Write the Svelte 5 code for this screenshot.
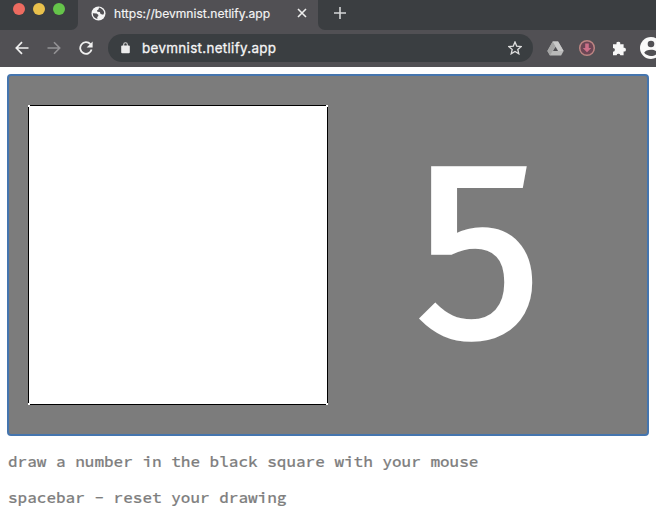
<script>
  const lights = ['#ed6b60', '#e9c14c', '#65c44a'];
  const hints = [
    'draw a number in the black square with your mouse',
    'spacebar - reset your drawing'
  ];
  const prediction = 5;
</script>

<div class="window">
  <header>
    <div class="tabs">
      <div class="lights">
        {#each lights as color}
          <i style="background: {color}"></i>
        {/each}
      </div>
      <div class="tab">
        <svg class="globe" width="15" height="15" viewBox="0 0 15 15">
          <circle cx="7.5" cy="7.5" r="7" fill="#f4f4f4" />
          <path d="M1.8 7.2 5.6 7.6 7.2 8.8 7.4 10 6.2 11 6.4 13 4 12 2.2 10ZM8 1.6 7.6 3.2 6 4.4 6.4 5.8 8.8 6 9.6 8 12.2 8.8 13.1 7 12.8 5.2 11.5 3.4 9.8 2.2Z" fill="#515054" />
        </svg>
        <span class="title">https://bevmnist.netlify.app</span>
        <svg class="close" width="10" height="10" viewBox="0 0 10 10">
          <path d="m1 1 8 8M9 1 1 9" stroke="#eee" stroke-width="1.6" />
        </svg>
      </div>
      <div class="rest">
        <svg width="12" height="12" viewBox="0 0 12 12">
          <path d="M6 0v12M0 6h12" stroke="#d5d6d7" stroke-width="1.6" />
        </svg>
      </div>
    </div>
    <div class="toolbar">
      <svg class="back" width="14" height="14" viewBox="0 0 14 14">
        <path d="M13.5 7H1.5M7 1.2 1.3 7 7 12.8" fill="none" stroke="#f0f0f0" stroke-width="1.7" />
      </svg>
      <svg class="forward" width="14" height="14" viewBox="0 0 14 14">
        <path d="M.5 7h12M7 1.2 12.7 7 7 12.8" fill="none" stroke="#939295" stroke-width="1.6" />
      </svg>
      <svg class="reload" width="14" height="14" viewBox="0 0 14 14">
        <path d="M11.4 3.2A5.8 5.8 0 1 0 12.6 8.6" fill="none" stroke="#f0f0f0" stroke-width="1.8" />
        <path d="M13.6.5v6H7.6Z" fill="#f0f0f0" />
      </svg>
      <div class="address">
        <svg class="lock" width="9" height="12" viewBox="0 0 9 12">
          <path d="M2.7 4.5V2.6a1.8 1.8 0 0 1 3.6 0v2" fill="none" stroke="#d4d4d4" stroke-width="1.1" />
          <rect x=".2" y="3.4" width="8.6" height="7.8" rx="1" fill="#ececec" />
        </svg>
        <span>bevmnist.netlify.app</span>
        <svg class="star" width="14" height="14" viewBox="0 0 14 14">
          <path d="m7 1 1.7 4.1 4.5.4-3.4 2.9 1 4.4L7 10.5l-3.8 2.3 1-4.4L.8 5.5l4.5-.4Z" fill="none" stroke="#dedede" stroke-width="1.3" />
        </svg>
      </div>
      <svg class="drive" width="17" height="15" viewBox="0 0 17 15">
        <path d="M5.7.5h5.4l5.5 9.5-2.5 4.5H3L.4 10Z" fill="#b9b9b9" />
        <path d="M5.7.5 8.4 5 3 14.5.4 10Z" fill="#a4a4a4" />
        <path d="M5.7.5h5.4l5.5 9.5h-5.2Z" fill="#c9c9c9" />
        <path d="M8.5 5.8 11 10H6Z" fill="#515054" />
      </svg>
      <svg class="download" width="18" height="18" viewBox="0 0 18 18">
        <circle cx="9" cy="9" r="7.3" fill="#6c4655" stroke="#bd8583" stroke-width="1.5" />
        <path d="M7.2 4.5h3.6V9h2.5L9 13.2 4.7 9h2.5Z" fill="#cc6f88" />
      </svg>
      <svg class="puzzle" width="15" height="15" viewBox="0 0 15 15">
        <path d="M1 3.2h3.5a1.9 1.9 0 1 1 3.7 0h3.4v3.6a1.9 1.9 0 1 1 0 3.7v3.8H8.3a1.9 1.9 0 0 0-3.7 0H1v-3.6a1.9 1.9 0 0 0 0-3.8Z" fill="#f7f7f7" />
      </svg>
      <svg class="user" width="22" height="22" viewBox="0 0 22 22">
        <circle cx="11" cy="11" r="11" fill="#fafafa" />
        <circle cx="11" cy="7" r="3.3" fill="#515054" />
        <path d="M4.2 15.8c1.6-4 12-4 13.6 0-3.5 4.2-10.1 4.2-13.6 0Z" fill="#515054" />
      </svg>
    </div>
  </header>

  <main>
    <div class="stage">
      <div class="pad"><i></i><i></i><i></i><i></i></div>
      <div class="result"><span>{prediction}</span></div>
    </div>
    {#each hints as hint}
      <p>{hint}</p>
    {/each}
  </main>
</div>

<style>
  :global(body) { background: #fff; }
  .window { width: 656px; height: 516px; overflow: hidden; }
  svg { display: block; flex: none; }
  header { height: 67px; background: #515054; font-family: "Inter", sans-serif; color: #f5f5f5; }
  .tabs { display: flex; height: 30px; background: #515054; }
  .lights { box-sizing: border-box; width: 78px; padding: 3px 0 0 13px; display: flex; gap: 8px; background: #3b3e41; border-radius: 0 0 7px 0; }
  .lights i { width: 12px; height: 12px; border-radius: 50%; }
  .tab { box-sizing: border-box; width: 240px; height: 26px; display: flex; align-items: center; padding-left: 13px; }
  .title { margin-left: 8px; width: 183px; font-size: 12.1px; -webkit-text-stroke: .15px #f5f5f5; white-space: nowrap; }
  .rest { flex: 1; padding: 7px 0 0 16px; background: #3b3e41; border-radius: 0 0 0 7px; }
  .toolbar { height: 36px; display: flex; align-items: center; }
  .back { margin-left: 15px; }
  .forward { margin-left: 18px; }
  .reload { margin-left: 18px; }
  .address { box-sizing: border-box; width: 425px; height: 28px; margin-left: 15px; padding: 0 11px 0 13px; border-radius: 14px; background: #3a3e41; display: flex; align-items: center; flex: none; }
  .address span { flex: 1; margin-left: 12px; font-size: 13.4px; letter-spacing: .33px; -webkit-text-stroke: .3px #f5f5f5; }
  .drive { margin-left: 14px; }
  .download { margin-left: 14px; }
  .puzzle { margin-left: 16px; }
  .user { margin-left: 13px; }
  main { padding: 7px 7px 0; }
  .stage { box-sizing: border-box; width: 642px; height: 362px; border: 2px solid #4575ae; border-radius: 4px; background: #7c7c7c; display: flex; padding: 29px 0 0 19px; }
  .pad { position: relative; box-sizing: border-box; width: 300px; height: 300px; border: 1px solid #000; background: #fff; }
  .pad i { position: absolute; width: 2px; height: 2px; background: #fff; }
  .pad i:nth-child(1) { left: -1px; top: -1px; }
  .pad i:nth-child(2) { right: -1px; top: -1px; }
  .pad i:nth-child(3) { left: -1px; bottom: -1px; }
  .pad i:nth-child(4) { right: -1px; bottom: -1px; }
  .result { margin-left: 87px; color: #fff; font: 400 253px/295px "Fira Sans", "DejaVu Sans", sans-serif; -webkit-text-stroke: 3.6px #fff; }
  p { margin: 0 0 0 1px; height: 36px; line-height: 50px; font-family: "Source Code Pro", "DejaVu Sans Mono", monospace; font-size: 16px; font-weight: 500; color: #7e7e7e; -webkit-text-stroke: .2px #7e7e7e; white-space: nowrap; }
</style>
